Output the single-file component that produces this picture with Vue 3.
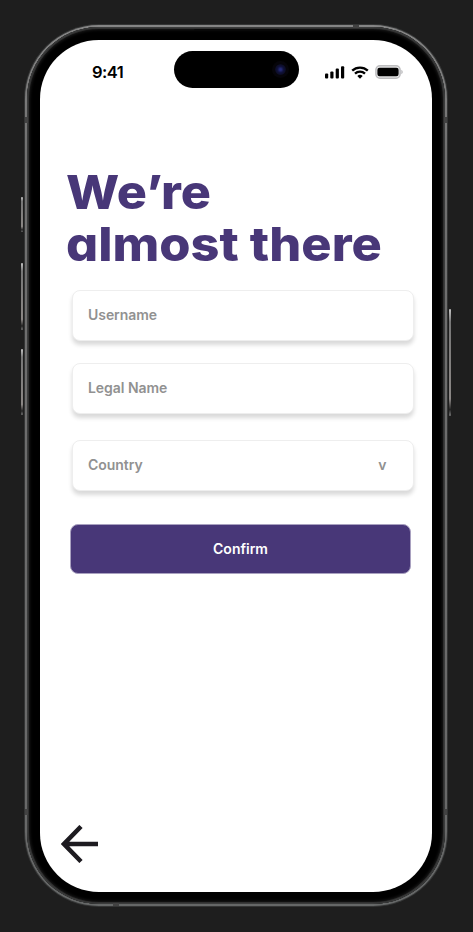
<script setup>
const fields = [
  { label: 'Username' },
  { label: 'Legal Name' },
  { label: 'Country', select: true },
]
const bars = [
  { x: 0, h: 5 },
  { x: 5.3, h: 7.2 },
  { x: 10.7, h: 10 },
  { x: 16, h: 12.4 },
]
</script>

<template>
  <main class="stage">
    <div class="phone">
      <i class="key mute"></i>
      <i class="key up"></i>
      <i class="key down"></i>
      <i class="key power"></i>
      <div class="rim">
        <div class="bezel">
          <section class="screen">
            <header class="status">
              <span class="time">9:41</span>
              <div class="island"><span class="lens"></span></div>
              <div class="indicators">
                <svg class="signal" width="20" height="13" viewBox="0 0 20 13">
                  <rect v-for="b in bars" :key="b.x" :x="b.x" :y="12.6 - b.h" width="3.2" :height="b.h" rx="1" />
                </svg>
                <svg class="wifi" width="18" height="13" viewBox="0 0 18 13">
                  <g fill="none" stroke="#000" stroke-width="2.3">
                    <path d="M1.2 4.7a11.2 11.2 0 0 1 15.6 0" />
                    <path d="M4 7.7a7.2 7.2 0 0 1 10 0" />
                  </g>
                  <path d="M6.3 10a4 4 0 0 1 5.4 0L9 12.8z" />
                </svg>
                <svg class="battery" width="28" height="14" viewBox="0 0 28 14">
                  <rect x=".9" y=".8" width="24.2" height="12.4" rx="4" fill="#e6e6e7" stroke="#bdbdbf" stroke-width="1.5" />
                  <rect x="2.4" y="2.7" width="21.2" height="8.6" rx="2.2" />
                  <path d="M26.3 4.8c1.9.8 1.9 3.6 0 4.4z" fill="#b9b9bb" />
                </svg>
              </div>
            </header>
            <h1><span class="first">We’re</span><br /><span class="second">almost there</span></h1>
            <form class="form" @submit.prevent>
              <div v-for="f in fields" :key="f.label" class="field" :class="{ select: f.select }">
                <span>{{ f.label }}</span>
                <span v-if="f.select" class="caret">v</span>
              </div>
              <button class="confirm">Confirm</button>
            </form>
            <svg class="back" width="38" height="38" viewBox="0 0 38 38">
              <path d="M20 1.5 3 19l17 17.5M3 19h34" fill="none" stroke="#1d1b20" stroke-width="4.5" />
            </svg>
          </section>
        </div>
      </div>
      <i class="speaker"></i>
      <i class="band top"></i>
      <i class="band bottom"></i>
      <i class="band left-a"></i>
      <i class="band left-b"></i>
      <i class="band right-a"></i>
      <i class="band right-b"></i>
    </div>
  </main>
</template>

<style>
body {
  background: #1e1e1e;
}
</style>

<style scoped>
* {
  box-sizing: border-box;
}
.stage {
  height: 932px;
  padding: 24px 24px 25px;
  background: #1e1e1e;
  font-family: Inter, "Liberation Sans", sans-serif;
}
.phone {
  position: relative;
  width: 424px;
  height: 883px;
  padding: 1px;
  border-radius: 75px;
  background: #343535;
}
.rim {
  height: 100%;
  padding: 2px;
  border-radius: 74px;
  background: linear-gradient(#858585, #707070 15%, #696969 85%, #656767);
}
.bezel {
  height: 100%;
  padding: 13px;
  border-radius: 72px;
  background: #000;
  box-shadow: inset 0 0 0 1px #3b3c3c, inset 0 0 0 2px #303030, inset 0 0 3px 3px #1a1a1a;
}
.screen {
  height: 852px;
  width: 392px;
  display: flex;
  flex-direction: column;
  border-radius: 59px;
  background: #fff;
}
.status {
  display: flex;
  padding-top: 11px;
}
.time {
  width: 82px;
  margin-left: 52px;
  padding-top: 11px;
  font-size: 16.5px;
  line-height: 20px;
  font-weight: 600;
  letter-spacing: -0.5px;
  color: #000;
}
.island {
  width: 125px;
  height: 37px;
  display: flex;
  align-items: center;
  justify-content: flex-end;
  padding-right: 13px;
  border-radius: 19px;
  background: #000;
}
.lens {
  width: 11px;
  height: 11px;
  border-radius: 50%;
  background: radial-gradient(circle, #252b78 0 10%, #10123b 40%, #0b0b1c 75%);
  box-shadow: 0 0 0 3px #06050a;
}
.indicators {
  display: flex;
  align-items: center;
  gap: 6px;
  height: 42px;
  padding-left: 26px;
}
h1 {
  margin: 73px 0 0 26px;
  font-size: 47px;
  line-height: 52px;
  font-weight: 800;
  color: #483778;
  white-space: nowrap;
  font-feature-settings: "cv11";
}
h1 span {
  display: inline-block;
  transform-origin: left;
}
.first {
  transform: scaleX(1.07);
}
.second {
  transform: scaleX(1.074);
}
.form {
  width: 342px;
  margin: 19.5px 0 0 31.5px;
}
.field {
  display: flex;
  align-items: center;
  justify-content: space-between;
  width: 342px;
  height: 51px;
  margin-bottom: 22px;
  padding: 0 26px 0 15.5px;
  border: 1px solid #eee;
  border-radius: 8px;
  background: #fff;
  box-shadow: 0 4px 4px rgba(0, 0, 0, 0.15);
  font-size: 14px;
  line-height: 20px;
  font-weight: 600;
  letter-spacing: -0.05px;
  color: #919191;
}
.select {
  margin-top: 26px;
  margin-bottom: 33px;
}
.confirm {
  display: block;
  width: 341px;
  height: 50px;
  margin-left: -1.5px;
  padding: 0;
  border: 1px solid #a9a1c0;
  border-radius: 8px;
  background: #483778;
  color: #fff;
  font: 600 14px/20px Inter, sans-serif;
}
.back {
  margin: auto 0 29.5px 21px;
}
.key {
  position: absolute;
  width: 2px;
  left: -3px;
  border-radius: 1px;
  background: linear-gradient(#c5c5c5, #777 12%, #8b8785 84%, #222 94%, #777);
}
.mute {
  top: 173px;
  height: 35px;
}
.up {
  top: 239px;
  height: 67px;
}
.down {
  top: 325px;
  height: 66px;
}
.power {
  left: 425px;
  top: 285px;
  height: 107px;
}
.speaker {
  position: absolute;
  left: 170px;
  top: 5px;
  width: 85px;
  height: 2px;
  border-radius: 1px;
  background: #080808;
}
.band {
  position: absolute;
  background: #424242;
}
.top,
.bottom {
  width: 6px;
  height: 3px;
}
.top {
  left: 329px;
  top: 1px;
}
.bottom {
  left: 89px;
  bottom: 1px;
}
.left-a,
.left-b,
.right-a,
.right-b {
  width: 3px;
  height: 6px;
}
.left-a,
.left-b {
  left: 1px;
}
.right-a,
.right-b {
  right: 1px;
}
.left-a,
.right-a {
  top: 93px;
}
.left-b,
.right-b {
  top: 785px;
}
</style>
